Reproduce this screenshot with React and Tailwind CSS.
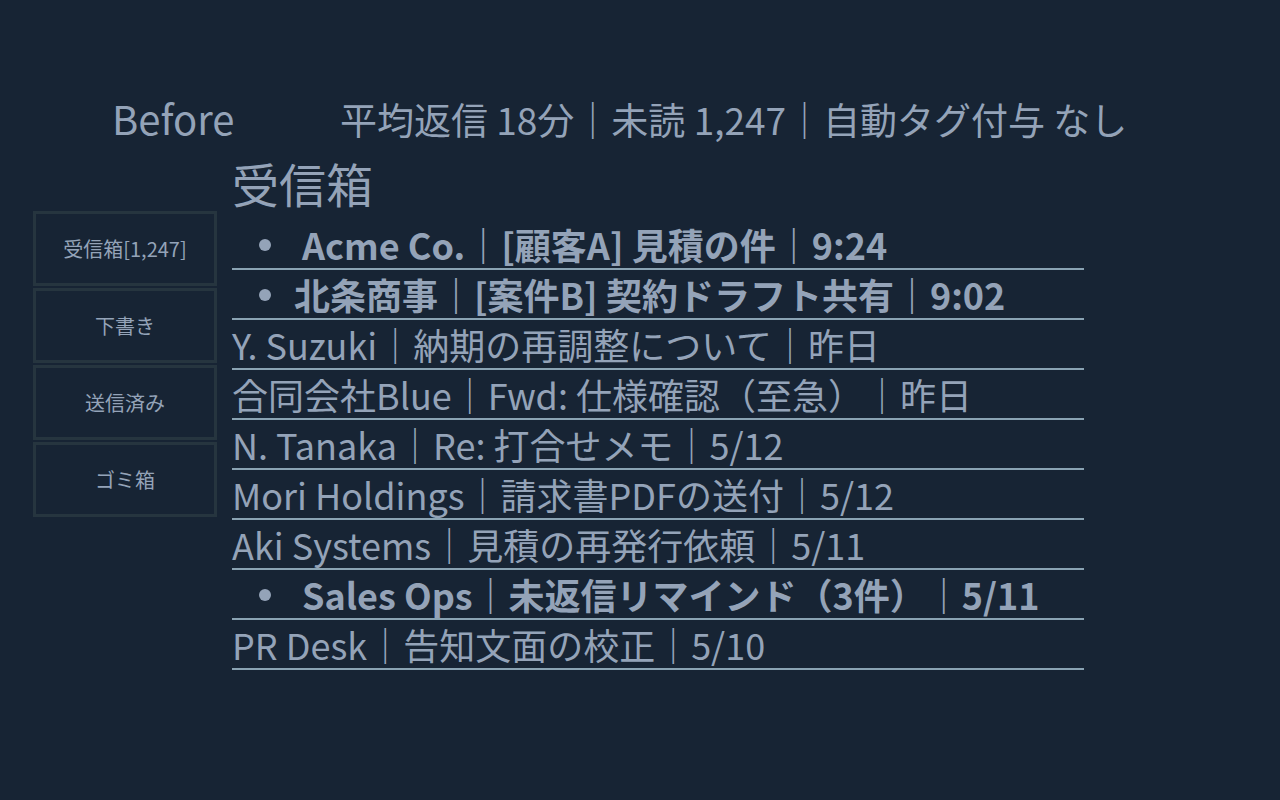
import React from "react";

const folders = ["受信箱[1,247]", "下書き", "送信済み", "ゴミ箱"];

const mails = [
  { unread: true, latin: true, text: "Acme Co.｜[顧客A] 見積の件｜9:24" },
  { unread: true, text: "北条商事｜[案件B] 契約ドラフト共有｜9:02" },
  { text: "Y. Suzuki｜納期の再調整について｜昨日" },
  { text: "合同会社Blue｜Fwd: 仕様確認（至急）｜昨日" },
  { text: "N. Tanaka｜Re: 打合せメモ｜5/12" },
  { text: "Mori Holdings｜請求書PDFの送付｜5/12" },
  { text: "Aki Systems｜見積の再発行依頼｜5/11" },
  { unread: true, latin: true, text: "Sales Ops｜未返信リマインド（3件）｜5/11" },
  { text: "PR Desk｜告知文面の校正｜5/10" },
];

const App = () => {
  return (
    <div
      className="min-h-[800px] w-[1280px] bg-[#172434] text-[#94a3b8]"
      style={{ fontFamily: '"Noto Sans CJK JP", "Noto Sans", sans-serif' }}
    >
      {/* top stats */}
      <div className="flex items-baseline pt-[94px] pl-[112px] leading-[48px]">
        <span className="w-[228px] text-[40px]">Before</span>
        <span className="text-[37px]">平均返信 18分｜未読 1,247｜自動タグ付与 なし</span>
      </div>

      <div className="flex pl-[33px]">
        {/* folders */}
        <div className="flex flex-col gap-[2px] pt-[68px] w-[184px]">
          {folders.map((f) => (
            <div
              key={f}
              className="h-[75px] flex items-center justify-center border-[3px] border-[#26353f] text-[20px]"
            >
              {f}
            </div>
          ))}
        </div>

        {/* inbox */}
        <div className="ml-[15px] w-[852px]">
          <h2 className="pt-[16px] text-[47px] leading-[48px]">受信箱</h2>
          <ul className="mt-[13px]">
            {mails.map((m, i) => (
              <li
                key={i}
                className="flex items-center h-[50px] border-b-2 border-[#8aa3b3] text-[36px] leading-[48px] whitespace-nowrap"
              >
                {m.unread ? (
                  <>
                    <span className="w-[66px] flex justify-center">
                      <span className="w-[12px] h-[12px] rounded-full bg-[#94a3b8] mt-[2px]" />
                    </span>
                    <span className={`font-bold ${m.latin ? "ml-[4px]" : "ml-[-4px]"}`}>
                      {m.text}
                    </span>
                  </>
                ) : (
                  <span>{m.text}</span>
                )}
              </li>
            ))}
          </ul>
        </div>
      </div>
    </div>
  );
};

export default App;
